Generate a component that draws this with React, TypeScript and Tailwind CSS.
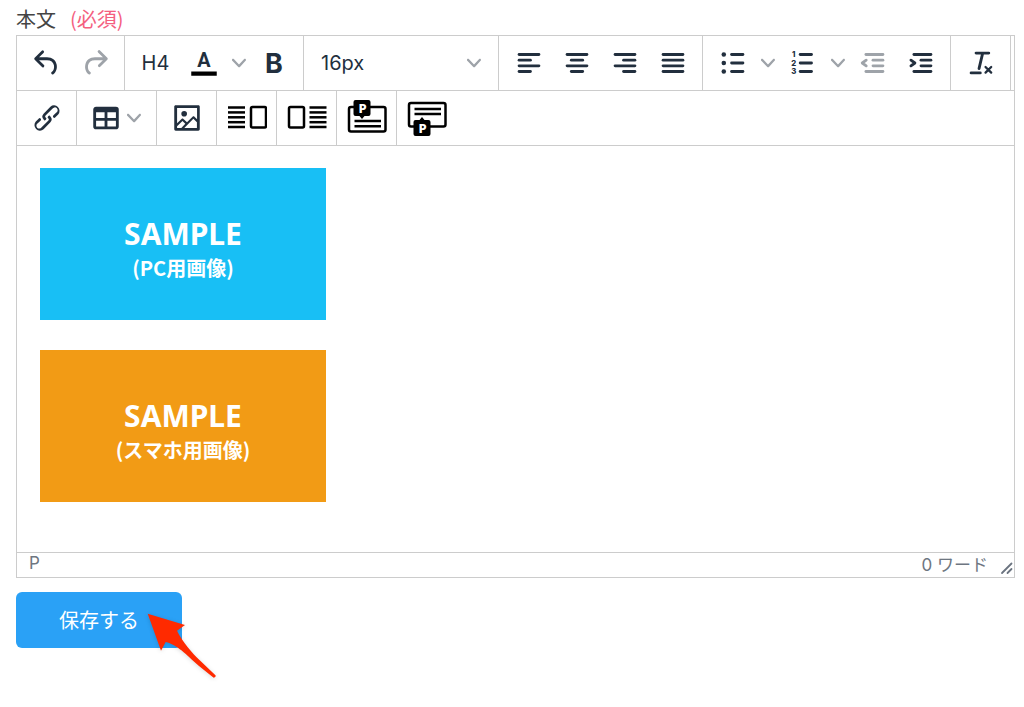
import React from 'react';

const PATHS = {
  undo: 'M6.4 8H12c3.7 0 6.2 2 6.8 5.1.6 2.7-.4 5.6-2.3 6.8a1 1 0 0 1-1-1.8c1.1-.6 1.8-2.7 1.4-4.6-.5-2.1-2.1-3.5-4.9-3.5H6.4l3.3 3.3a1 1 0 1 1-1.4 1.4l-5-5a1 1 0 0 1 0-1.4l5-5a1 1 0 0 1 1.4 1.4L6.4 8z',
  redo: 'M17.6 10H12c-2.8 0-4.4 1.4-4.9 3.5-.4 2 .3 4 1.4 4.6a1 1 0 1 1-1 1.8c-2-1.2-2.9-4.1-2.3-6.8.6-3 3-5.1 6.8-5.1h5.6l-3.3-3.3a1 1 0 1 1 1.4-1.4l5 5a1 1 0 0 1 0 1.4l-5 5a1 1 0 0 1-1.4-1.4l3.3-3.3z',
  link: 'M6.2 12.3a1 1 0 0 1 1.4 1.4l-2.1 2a2 2 0 1 0 2.7 2.8l4.8-4.8a1 1 0 0 0 0-1.4 1 1 0 1 1 1.4-1.3 2.9 2.9 0 0 1 0 4L9.6 20a3.9 3.9 0 0 1-5.5-5.5l2-2zm11.6-.6a1 1 0 0 1-1.4-1.4l2-2a2 2 0 1 0-2.6-2.8L11 10.3a1 1 0 0 0 0 1.4A1 1 0 1 1 9.6 13a2.9 2.9 0 0 1 0-4L14.4 4a3.9 3.9 0 0 1 5.5 5.5l-2 2z',
  table: 'M19 4a2 2 0 0 1 2 2v12a2 2 0 0 1-2 2H5a2 2 0 0 1-2-2V6c0-1.1.9-2 2-2h14zM5 14v4h6v-4H5zm14 0h-6v4h6v-4zm0-6h-6v4h6V8zM5 12h6V8H5v4z',
  image: 'M5 15.7l3.3-3.2c.3-.3.7-.3 1 0L12 15l4.1-4c.3-.4.8-.4 1 0l2 1.9V5H5v10.7zM5 18V19h3l2.8-2.9-2-2L5 17.9zm14-3l-2.5-2.4-6.4 6.5H19v-4zM4 3h16c.6 0 1 .4 1 1v16c0 .6-.4 1-1 1H4a1 1 0 0 1-1-1V4c0-.6.4-1 1-1zm6 8a2 2 0 1 0 0-4 2 2 0 0 0 0 4z',
};

function Icon({ children }: { children: React.ReactNode }) {
  return (
    <svg viewBox="0 0 24 24" className="size-[34px] shrink-0" fill="currentColor" aria-hidden="true">
      {children}
    </svg>
  );
}

function PathIcon({ name }: { name: keyof typeof PATHS }) {
  return (
    <Icon>
      <path fillRule="evenodd" d={PATHS[name]} />
    </Icon>
  );
}

// Each row is [x1, x2, y] of one rounded bar
function Bars({ rows }: { rows: number[][] }) {
  return (
    <g stroke="currentColor" strokeWidth="2" strokeLinecap="round">
      {rows.map(([x1, x2, y]) => (
        <line key={y} x1={x1} x2={x2} y1={y} y2={y} />
      ))}
    </g>
  );
}

function Chevron() {
  return (
    <svg viewBox="0 0 10 10" className="size-[14px] shrink-0 text-[#9ea3a9]" fill="currentColor" aria-hidden="true">
      <path d="M8.7 2.2c.3-.3.8-.3 1 0 .4.4.4.9 0 1.2L5.7 7.8c-.3.3-.9.3-1.2 0L.2 3.4a.8.8 0 0 1 0-1.2c.3-.3.8-.3 1.1 0L5 6l3.7-3.8z" />
    </svg>
  );
}

interface ToolButtonProps {
  label: string;
  disabled?: boolean;
  children: React.ReactNode;
}

function ToolButton({ label, disabled, children }: ToolButtonProps) {
  return (
    <button
      type="button"
      aria-label={label}
      disabled={disabled}
      className="flex h-12 w-12 items-center justify-center text-[#222f3e] disabled:text-[#9ea3a9]"
    >
      {children}
    </button>
  );
}

function MenuArrow({ label }: { label: string }) {
  return (
    <button type="button" aria-label={label} className="flex h-12 w-[22px] items-center justify-center">
      <Chevron />
    </button>
  );
}

function Group({ children }: { children: React.ReactNode }) {
  return <div className="flex h-[54px] items-center border-r border-[#ccc] pr-[5px] pl-[6px]">{children}</div>;
}

function WideIcon({ children }: { children: React.ReactNode }) {
  return (
    <svg viewBox="0 0 40 36" className="h-9 w-10 shrink-0 text-black" fill="none" stroke="currentColor" strokeWidth="2.5" aria-hidden="true">
      {children}
    </svg>
  );
}

const STRIPES = [7.5, 12.4, 17.3, 22.2, 27];

function SampleImage({ caption, className }: { caption: string; className: string }) {
  return (
    <div
      role="img"
      aria-label={`SAMPLE ${caption}`}
      className={`flex h-[152px] w-[286px] flex-col items-center justify-center pt-3 text-white ${className}`}
    >
      <span className="font-['Noto_Sans','Noto_Sans_CJK_JP',sans-serif] text-[30px] leading-9 font-bold">SAMPLE</span>
      <span className="font-['Noto_Sans_CJK_JP',sans-serif] text-[20px] leading-8 font-bold">{caption}</span>
    </div>
  );
}

export default function App() {
  return (
    <div className="min-h-screen bg-white pt-[5px] pr-[9px] pb-8 pl-4 font-['Inter','Noto_Sans_CJK_JP',sans-serif] text-[#222f3e]">
      <div className="flex h-[30px] items-start gap-[14px] font-['Noto_Sans_CJK_JP',sans-serif] text-[20px] leading-7">
        <span id="body-label" className="text-[#444]">本文</span>
        <span className="text-[#f4607f]">(必須)</span>
      </div>

      <div className="border border-[#ccc]">
        <div className="flex flex-wrap border-b border-[#ccc]" role="toolbar">
          <Group>
            <ToolButton label="元に戻す">
              <PathIcon name="undo" />
            </ToolButton>
            <ToolButton label="やり直し" disabled>
              <PathIcon name="redo" />
            </ToolButton>
          </Group>
          <Group>
            <button type="button" className="h-12 w-[49px] text-[20px] leading-6">
              H4
            </button>
            <ToolButton label="テキストの色">
              <Icon>
                <text x="12" y="15" textAnchor="middle" fontSize="14" fontWeight="700" fontFamily="Roboto, sans-serif">A</text>
                <path d="M3 18h18v3H3z" fill="#000" />
              </Icon>
            </ToolButton>
            <MenuArrow label="色メニュー" />
            <ToolButton label="太字">
              <Icon>
                <text x="12" y="19" textAnchor="middle" fontSize="19" fontWeight="700" fontFamily="Inter, sans-serif">B</text>
              </Icon>
            </ToolButton>
          </Group>
          <Group>
            <div className="relative flex items-center">
              <select aria-label="フォントサイズ" className="h-12 w-[183px] appearance-none bg-transparent pl-[11px] text-[20px] leading-6">
                <option>16px</option>
              </select>
              <span className="pointer-events-none absolute right-3">
                <Chevron />
              </span>
            </div>
          </Group>
          <Group>
            <ToolButton label="左寄せ">
              <Icon>
                <Bars rows={[[5, 19, 6], [5, 13, 10], [5, 19, 14], [5, 13, 18]]} />
              </Icon>
            </ToolButton>
            <ToolButton label="中央揃え">
              <Icon>
                <Bars rows={[[5, 19, 6], [8, 16, 10], [5, 19, 14], [8, 16, 18]]} />
              </Icon>
            </ToolButton>
            <ToolButton label="右寄せ">
              <Icon>
                <Bars rows={[[5, 19, 6], [11, 19, 10], [5, 19, 14], [11, 19, 18]]} />
              </Icon>
            </ToolButton>
            <ToolButton label="両端揃え">
              <Icon>
                <Bars rows={[[5, 19, 6], [5, 19, 10], [5, 19, 14], [5, 19, 18]]} />
              </Icon>
            </ToolButton>
          </Group>
          <Group>
            <ToolButton label="箇条書き">
              <Icon>
                <Bars rows={[[11, 19, 6], [11, 19, 12], [11, 19, 18]]} />
                <circle cx="5.5" cy="6" r="1.6" />
                <circle cx="5.5" cy="12" r="1.6" />
                <circle cx="5.5" cy="18" r="1.6" />
              </Icon>
            </ToolButton>
            <MenuArrow label="箇条書きメニュー" />
            <ToolButton label="番号付き箇条書き">
              <Icon>
                <Bars rows={[[10, 18, 6], [10, 18, 12], [10, 18, 18]]} />
                <g fontSize="5.5" fontWeight="800" fontFamily="Inter, sans-serif" textAnchor="middle">
                  <text x="5.5" y="8">1</text>
                  <text x="5.5" y="14">2</text>
                  <text x="5.5" y="20">3</text>
                </g>
              </Icon>
            </ToolButton>
            <MenuArrow label="番号メニュー" />
            <ToolButton label="インデントを減らす" disabled>
              <Icon>
                <Bars rows={[[7, 19, 6], [12, 19, 10], [12, 19, 14], [7, 19, 18]]} />
                <path d="M7.2 10L4.4 12l2.8 2" fill="none" stroke="currentColor" strokeWidth="2" strokeLinecap="round" strokeLinejoin="round" />
              </Icon>
            </ToolButton>
            <ToolButton label="インデントを増やす">
              <Icon>
                <Bars rows={[[7, 19, 6], [12, 19, 10], [12, 19, 14], [7, 19, 18]]} />
                <path d="M4.9 10L7.7 12l-2.8 2" fill="none" stroke="currentColor" strokeWidth="2" strokeLinecap="round" strokeLinejoin="round" />
              </Icon>
            </ToolButton>
          </Group>
          <Group>
            <ToolButton label="書式をクリア">
              <Icon>
                <g fill="none" stroke="currentColor" strokeWidth="2" strokeLinecap="round">
                  <path d="M8.5 5h9M13.2 5l-2.6 11" />
                  <path d="M5 19h6.5" />
                  <path d="M15.2 14.8l4 4M19.2 14.8l-4 4" strokeWidth="1.6" />
                </g>
              </Icon>
            </ToolButton>
          </Group>
        </div>

        <div className="flex flex-wrap border-b border-[#ccc]" role="toolbar">
          <Group>
            <ToolButton label="リンク">
              <PathIcon name="link" />
            </ToolButton>
          </Group>
          <Group>
            <button type="button" aria-label="表" className="flex h-12 w-[68px] items-center gap-1 pl-[6px]">
              <PathIcon name="table" />
              <Chevron />
            </button>
          </Group>
          <Group>
            <ToolButton label="画像">
              <PathIcon name="image" />
            </ToolButton>
          </Group>
          <Group>
            <ToolButton label="画像を右に配置">
              <WideIcon>
                {STRIPES.map((y) => (
                  <line key={y} x1="1" x2="18" y1={y} y2={y} />
                ))}
                <rect x="24" y="7" width="15" height="20.5" rx="1.5" />
              </WideIcon>
            </ToolButton>
          </Group>
          <Group>
            <ToolButton label="画像を左に配置">
              <WideIcon>
                <rect x="2" y="7" width="15" height="20.5" rx="1.5" />
                {STRIPES.map((y) => (
                  <line key={y} x1="22.5" x2="39.5" y1={y} y2={y} />
                ))}
              </WideIcon>
            </ToolButton>
          </Group>
          <Group>
            <ToolButton label="上に段落を追加">
              <WideIcon>
                <rect x="2" y="7" width="36.5" height="24.5" rx="2" />
                <path d="M7.5 21h26.5M7.5 26.3h26.5" />
                <path d="M8.5 0h13a2 2 0 0 1 2 2v12a2 2 0 0 1-2 2h-4L15 19l-2.5-3h-4a2 2 0 0 1-2-2V2a2 2 0 0 1 2-2z" fill="currentColor" stroke="none" />
                <text x="15.5" y="12.5" textAnchor="middle" fontSize="13" fontWeight="800" fontFamily="Noto Sans, sans-serif" fill="#fff" stroke="none">P</text>
              </WideIcon>
            </ToolButton>
          </Group>
          <div className="flex h-[54px] items-center px-[6px]">
            <ToolButton label="下に段落を追加">
              <WideIcon>
                <rect x="2" y="3" width="36.5" height="23.5" rx="2" />
                <path d="M7.5 9h26.5M7.5 14h26.5" />
                <path d="M8.5 20h4L15 17l2.5 3h4a2 2 0 0 1 2 2v12a2 2 0 0 1-2 2h-13a2 2 0 0 1-2-2V22a2 2 0 0 1 2-2z" fill="currentColor" stroke="none" />
                <text x="15.5" y="32.5" textAnchor="middle" fontSize="13" fontWeight="800" fontFamily="Noto Sans, sans-serif" fill="#fff" stroke="none">P</text>
              </WideIcon>
            </ToolButton>
          </div>
        </div>

        <div aria-labelledby="body-label" role="group" className="flex min-h-[406px] flex-col gap-[30px] px-[23px] pt-[22px]">
          <SampleImage caption="(PC用画像)" className="bg-[#18bff5]" />
          <SampleImage caption="(スマホ用画像)" className="bg-[#f29b15]" />
        </div>

        <div className="flex h-[25px] items-center justify-between border-t border-[#ccc] pl-3 text-[17px] leading-5 text-[#6e7681]">
          <span className="pb-1">P</span>
          <div className="flex items-end gap-3">
            <span>0 ワード</span>
            <svg viewBox="0 0 14 14" className="size-[14px]" stroke="#6b7480" strokeWidth="1.8" strokeLinecap="round" aria-hidden="true">
              <path d="M2 12L11.5 2.5M7.5 12l4-4" />
            </svg>
          </div>
        </div>
      </div>

      <div className="relative mt-[14px] inline-block">
        <button
          type="button"
          className="h-14 rounded-md bg-[#2aa1f6] px-[43px] font-['Noto_Sans_CJK_JP',sans-serif] text-[20px] leading-7 text-white"
        >
          保存する
        </button>
        <svg viewBox="0 0 70 66" className="pointer-events-none absolute top-5 left-[131px] h-[66px] w-[70px] drop-shadow-sm" aria-hidden="true">
          <path d="M.7 1.7L38 13l-8 5.7C35 29 45 41 53 48.5L68.7 63.5q.3 2-2 2.2L52 54C44 47 40 43 34.7 38.5 30 35 24 31 18.7 30L14 38.7z" fill="#ff2a00" />
        </svg>
      </div>
    </div>
  );
}
